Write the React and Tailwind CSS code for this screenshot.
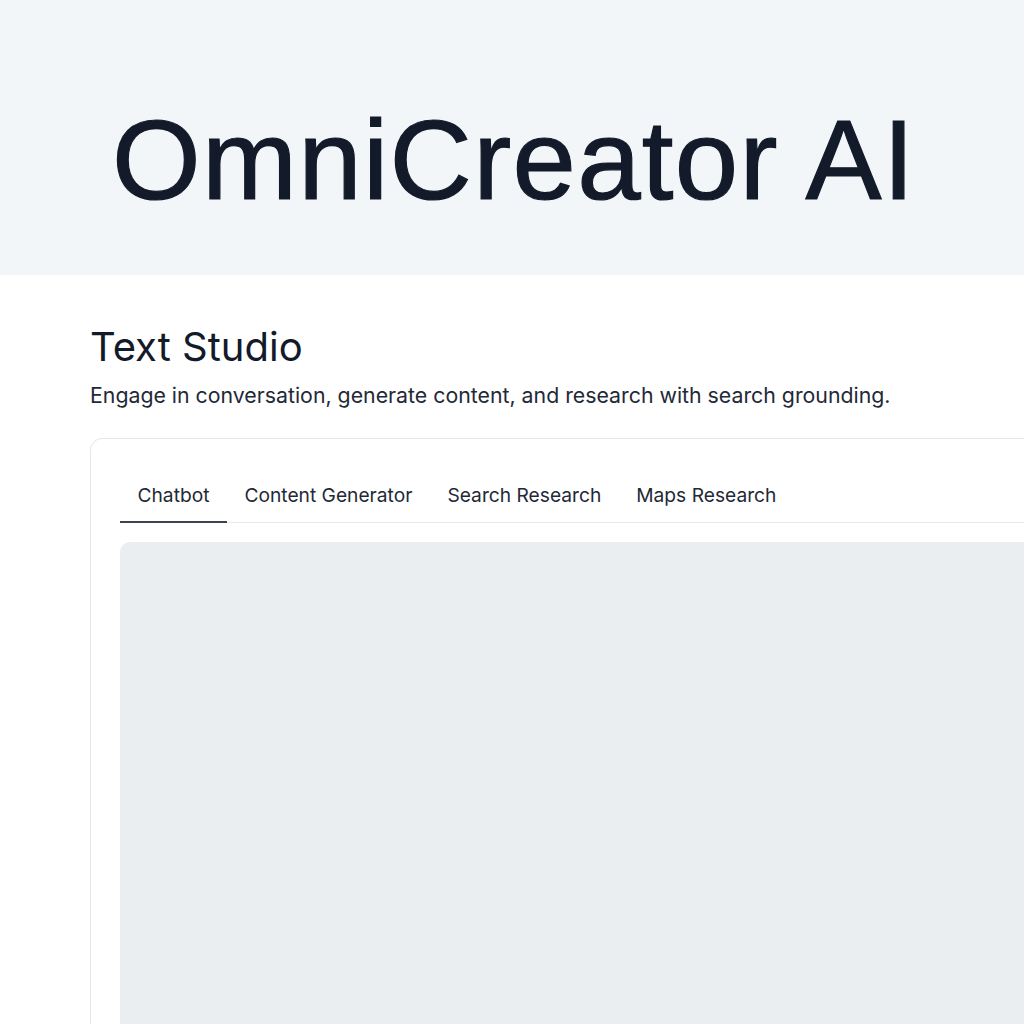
export default function App() {
  const tabs = ["Chatbot", "Content Generator", "Search Research", "Maps Research"];
  return (
    <div className="w-[1024px] h-[1024px] overflow-hidden bg-white" style={{ fontFamily: "Inter, 'Noto Sans', sans-serif" }}>
      <header className="h-[275px] bg-[#f3f6f8] flex items-start pl-[112px] pt-[96px]">
        <h1
          className="text-[114px] leading-[128px] font-normal text-[#131a2a] tracking-[1.3px] whitespace-nowrap [-webkit-text-stroke:1.2px_#131a2a]"
          style={{ fontFamily: "'Liberation Sans', Arial, sans-serif" }}
        >
          OmniCreator AI
        </h1>
      </header>
      <main className="pl-[90px] pt-[48px]">
        <h2 className="text-[40px] leading-[48px] text-[#131a2a] font-normal">Text Studio</h2>
        <p className="mt-[10px] text-[21.3px] leading-[28px] text-[#1f2937] whitespace-nowrap">Engage in conversation, generate content, and research with search grounding.</p>
        <section className="mt-[29px] w-[1000px] h-[620px] border border-[#e3e6ea] rounded-[12px] pl-[29px] pt-[34px] bg-white">
          <div className="flex border-b border-[#e6e8eb]">
            {tabs.map((t, i) => (
              <button
                key={t}
                className={`px-[17.5px] pt-[10px] pb-[14px] text-[19.2px] leading-[24px] text-[#1f2937] whitespace-nowrap border-b-2 -mb-px ${i === 0 ? "border-[#3b4350]" : "border-transparent"}`}
              >
                {t}
              </button>
            ))}
          </div>
          <div className="mt-[19px] h-[600px] bg-[#eaeef0] rounded-[10px]" />
        </section>
      </main>
    </div>
  );
}
